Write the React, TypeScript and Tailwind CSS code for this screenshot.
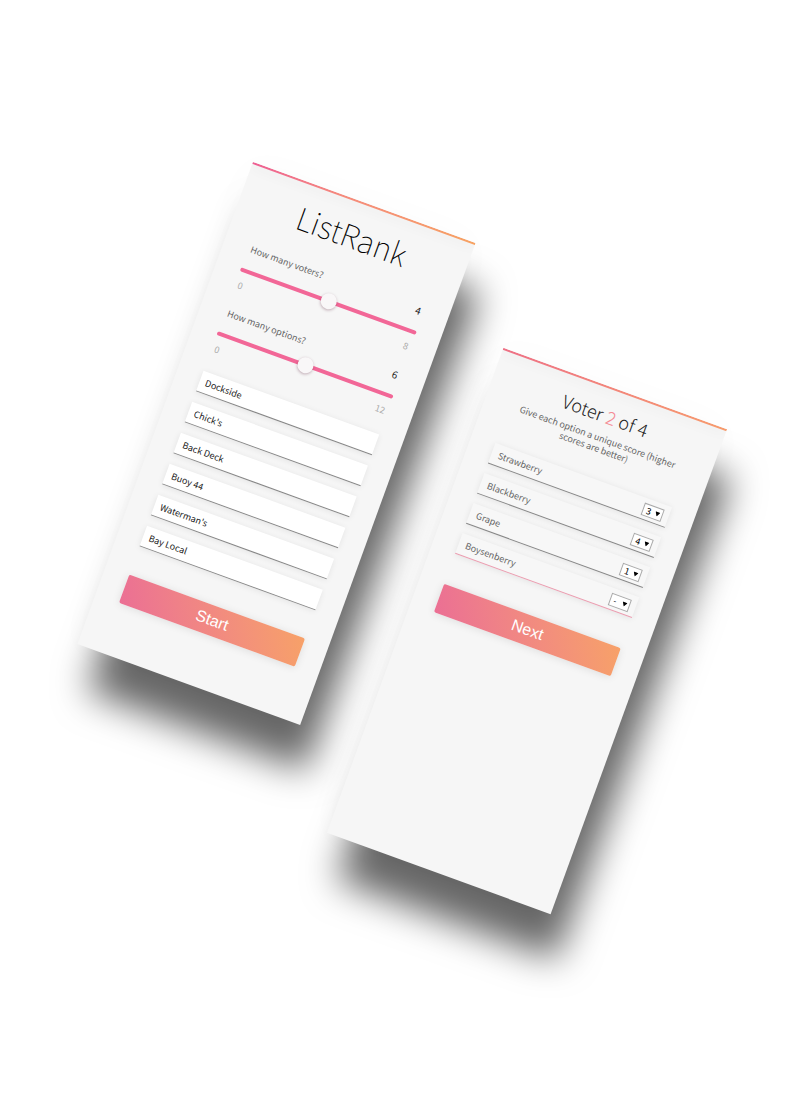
import { useState } from "react";
import type { ReactNode } from "react";

function Phone({ size, bar, children }: { size: string; bar: string; children: ReactNode }) {
  return (
    <section
      className={`${size} shrink-0 rotate-20 bg-[#f6f6f6] shadow-[23px_43px_36px_-2px_rgba(0,0,0,0.6),0_0_36px_rgba(0,0,0,0.02)]`}
    >
      <div className={`${bar} h-[2px] bg-linear-to-r shadow-[0_2px_12px_rgba(0,0,0,0.1)] [clip-path:inset(0_0_-20px_0)]`} />
      <div className="px-[25px]">{children}</div>
    </section>
  );
}

function RangeField({ id, label, max, initial }: { id: string; label: string; max: number; initial: number }) {
  const [value, setValue] = useState(initial);
  return (
    <div className="mb-3 h-[56px]">
      <div className="flex h-4 items-center justify-between px-[3px] leading-4">
        <label htmlFor={id} className="text-[#666]">{label}</label>
        <output htmlFor={id} className="text-[10px] text-[#222]">{value}</output>
      </div>
      <input
        id={id}
        type="range"
        min={0}
        max={max}
        value={value}
        onChange={(e) => setValue(Number(e.target.value))}
        className="mt-[6px] block h-4 w-full cursor-pointer appearance-none bg-transparent [&::-webkit-slider-runnable-track]:h-1 [&::-webkit-slider-runnable-track]:rounded-full [&::-webkit-slider-runnable-track]:bg-[#f26797] [&::-webkit-slider-thumb]:-mt-1.5 [&::-webkit-slider-thumb]:size-4 [&::-webkit-slider-thumb]:appearance-none [&::-webkit-slider-thumb]:rounded-full [&::-webkit-slider-thumb]:bg-[#f9f7f8] [&::-webkit-slider-thumb]:shadow-[0_1px_3px_rgba(90,30,55,0.35)]"
      />
      <div className="flex justify-between px-[3px] leading-4 text-[#aaa]">
        <span>0</span>
        <span>{max}</span>
      </div>
    </div>
  );
}

function PrimaryButton({ children }: { children: ReactNode }) {
  return (
    <button
      type="submit"
      className="block h-[30px] w-full rounded-xs bg-linear-60 from-[#eb6f94] to-[#f7a168] font-['Liberation_Sans',Arial,sans-serif] text-base leading-[30px] text-white shadow-[0_1px_8px_rgba(0,0,0,0.1)]"
    >
      {children}
    </button>
  );
}

const places = ["Dockside", "Chick's", "Back Deck", "Buoy 44", "Waterman's", "Bay Local"];

const ballot = [
  { name: "Strawberry", score: "3" },
  { name: "Blackberry", score: "4" },
  { name: "Grape", score: "1" },
  { name: "Boysenberry", score: "-" },
];

function ScoreRow({ name, score }: { name: string; score: string }) {
  const [value, setValue] = useState(score);
  const edge = value === "-" ? "border-[#eb9db0]" : "border-[#888]";
  const id = `score-${name}`;
  return (
    <li className={`${edge} flex h-[22px] items-center justify-between border-b bg-[#f7f7f7] pr-[6px] pl-[7px] shadow-[0_1px_6px_rgba(0,0,0,0.08)]`}>
      <label htmlFor={id} className="leading-[20px] text-[#666]">{name}</label>
      <span className="relative mt-0.5 block">
        <select
          id={id}
          value={value}
          onChange={(e) => setValue(e.target.value)}
          className="block h-[13px] w-[21px] appearance-none border border-[#aaa] bg-white pl-[3px] leading-[11px] text-black"
        >
          {["-", "1", "2", "3", "4"].map((n) => (
            <option key={n}>{n}</option>
          ))}
        </select>
        <svg viewBox="0 0 10 10" className="pointer-events-none absolute top-1 right-[3px] size-[5px]" aria-hidden="true">
          <path d="M0 1h10L5 10z" fill="#000" />
        </svg>
      </span>
    </li>
  );
}

export default function App() {
  return (
    <main className="flex min-h-screen items-start justify-center gap-[13px] overflow-hidden bg-white pt-[187px] pb-[203px] pl-1 font-['Noto_Sans_CJK_JP','Noto_Sans',sans-serif] text-[9px]">
      <Phone size="min-h-[513px] w-[237px]" bar="from-[#ee5f93] via-[#f58a7c] to-[#f7a262] via-40%">
        <form onSubmit={(e) => e.preventDefault()}>
          <h1 className="pt-[13px] pb-[20px] text-center text-[31px] leading-[40px] font-thin text-black">ListRank</h1>
          <RangeField id="voters" label="How many voters?" max={8} initial={4} />
          <RangeField id="options" label="How many options?" max={12} initial={6} />
          <ul className="mb-[30px] flex flex-col gap-[11px] pt-[2px]">
            {places.map((place, i) => (
              <li key={place}>
                <input
                  aria-label={`Option ${i + 1}`}
                  defaultValue={place}
                  className="block h-[22px] w-full border-b border-[#888] bg-white px-[6px] text-[#222] shadow-[0_1px_6px_rgba(0,0,0,0.08)]"
                />
              </li>
            ))}
          </ul>
          <PrimaryButton>Start</PrimaryButton>
        </form>
      </Phone>
      <div className="pt-[186px]">
        <Phone size="min-h-[516px] w-[238px]" bar="from-[#ee7186] to-[#f79b6c]">
          <form onSubmit={(e) => e.preventDefault()}>
            <h2 className="pt-[14px] text-center text-[18px] leading-[24px] font-light text-[#222]">
              Voter <span className="text-[#f58a94]">2</span> of 4
            </h2>
            <p className="mx-auto mb-6 w-[172px] pt-[6px] text-center leading-[11px] text-[#666]">
              Give each option a unique score (higher scores are better)
            </p>
            <ul className="mb-[32px] flex flex-col gap-[10px]">
              {ballot.map((row) => (
                <ScoreRow key={row.name} {...row} />
              ))}
            </ul>
            <PrimaryButton>Next</PrimaryButton>
          </form>
        </Phone>
      </div>
    </main>
  );
}
